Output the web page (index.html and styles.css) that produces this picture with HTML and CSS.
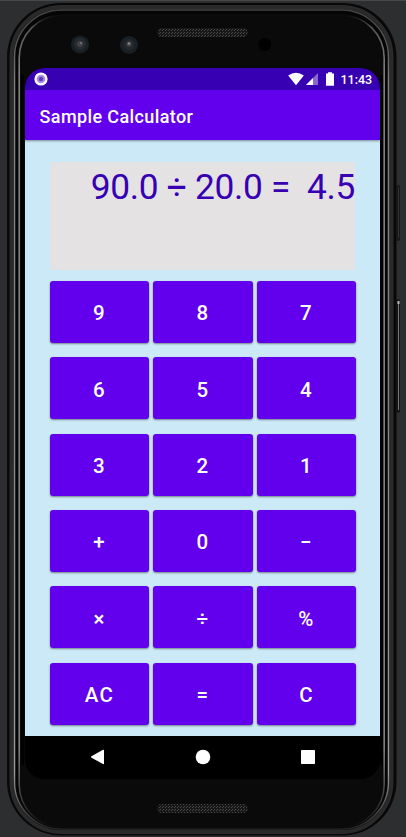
FILE: index.html
```html
<!DOCTYPE html>
<html lang="en">
<head>
<meta charset="utf-8">
<title>Sample Calculator</title>
<link rel="stylesheet" href="styles.css">
</head>
<body>
<div class="emulator">
  <svg class="shell" viewBox="0 0 406 837" aria-hidden="true">
    <defs>
      <linearGradient id="edge" x1="0" x2="0" y1="0" y2="1">
        <stop offset="0" stop-color="#444"/><stop offset=".04" stop-color="#555"/><stop offset=".09" stop-color="#808080"/><stop offset=".5" stop-color="#858585"/><stop offset=".93" stop-color="#999"/><stop offset="1" stop-color="#252525"/>
      </linearGradient>
      <linearGradient id="inner" x1="0" x2="0" y1="0" y2="1">
        <stop offset="0" stop-color="#0a0a0a"/><stop offset=".015" stop-color="#55555a"/><stop offset=".07" stop-color="#808080"/><stop offset=".9" stop-color="#808080"/><stop offset=".97" stop-color="#333338"/><stop offset="1" stop-color="#0a0a0a"/>
      </linearGradient>
      <pattern id="mesh" width="3" height="3" patternUnits="userSpaceOnUse">
        <rect width="3" height="3" fill="#171717"/><path d="M0 0h1v1H0zM1 2h1v1H1z" fill="#484848"/>
      </pattern>
    </defs>
    <path d="M0 .5H406" stroke="#46484a"/>
    <path d="M0 836.5H406" stroke="#302b2f"/>
    <rect x="7" y="3" width="389.500" height="832.500" rx="54" fill="#080808"/>
    <rect x="11.500" y="7" width="380" height="825" rx="50" fill="none" stroke="#2a2a2a" stroke-width="4"/>
    <rect x="14.500" y="10" width="374" height="819" rx="47" fill="#050505" stroke="url(#edge)" stroke-width="1.500"/>
    <rect x="19.200" y="15" width="365" height="812.500" rx="43" fill="#0a0a0a" stroke="url(#inner)" stroke-width="1.600"/>
    <path d="M22.500 75V765M381.500 75V765" stroke="#020202" stroke-width="3"/>
    <rect x="396" y="185" width="4" height="56" rx="2" fill="#161616"/>
    <path d="M398.500 187V238" stroke="#343434"/>
    <rect x="396" y="299" width="4" height="114" rx="2" fill="#151515"/>
    <path d="M398.500 302V410" stroke="#777"/>
    <path d="M398.500 301V304" stroke="#bbb" stroke-width="2"/>
    <rect x="157.500" y="28" width="90" height="9" rx="4" fill="url(#mesh)"/>
    <rect x="157.500" y="804" width="90" height="9" rx="4" fill="url(#mesh)"/>
    <circle cx="80" cy="44.500" r="9" fill="#192025"/><circle cx="80" cy="44" r="6" fill="#282b2e"/><circle cx="80" cy="44" r="3" fill="#42424a"/><circle cx="81" cy="43" r="1" fill="#777785"/>
    <circle cx="129" cy="45" r="9" fill="#192025"/><circle cx="129" cy="44.500" r="5.500" fill="#25282a"/><circle cx="129" cy="44" r="2.500" fill="#4a4a4d"/><circle cx="129" cy="43.500" r="1" fill="#999"/>
    <circle cx="264.700" cy="44.500" r="6.500" fill="#010102"/>
  </svg>
  <main class="screen">
    <div class="status">
      <svg class="record" viewBox="0 0 14 14"><circle cx="7" cy="7" r="6.600" fill="#fff"/><circle cx="7" cy="7" r="4.300" fill="#a88be0"/><circle cx="7" cy="7" r="2.200" fill="#6539c4"/></svg>
      <svg class="signals" viewBox="0 0 48 14">
        <path d="M.2 3.500Q8-2 15.800 3.500L8 13.200Z" fill="#fff"/>
        <path d="M18 13L30 1V13Z" fill="#8968d3"/><path d="M18 13L25 6V13Z" fill="#fff"/>
        <path d="M38 1.500h2V.3h4v1.200h2V13.700h-8z" fill="#fff"/>
      </svg>
      <span class="time">11:43</span>
    </div>
    <header class="appbar"><h1 class="title">Sample Calculator</h1></header>
    <section class="content">
      <div class="display">90.0 ÷ 20.0 =  4.5</div>
      <div class="keys">
        <button class="key">9</button><button class="key">8</button><button class="key">7</button>
        <button class="key">6</button><button class="key">5</button><button class="key">4</button>
        <button class="key">3</button><button class="key">2</button><button class="key">1</button>
        <button class="key">+</button><button class="key">0</button><button class="key">−</button>
        <button class="key">×</button><button class="key">÷</button><button class="key">%</button>
        <button class="key">AC</button><button class="key">=</button><button class="key">C</button>
      </div>
    </section>
    <nav class="navbar">
      <svg class="nav-icon" viewBox="0 0 16 16"><path d="M14 1.500V14.500Q14 15.500 13 15L1.500 8.700Q.5 8 1.500 7.300L13 .8Q14 .5 14 1.500Z" fill="#fff"/></svg>
      <svg class="nav-icon" viewBox="0 0 16 16"><circle cx="8" cy="8" r="7.300" fill="#fff"/></svg>
      <svg class="nav-icon" viewBox="0 0 16 16"><rect x="1" y="1" width="14" height="14" rx=".8" fill="#fff"/></svg>
    </nav>
  </main>
</div>
</body>
</html>
```
FILE: styles.css
```css
* { box-sizing: border-box; }
body { margin: 0; background: #2d2e30; font-family: Roboto, sans-serif; overflow: hidden; }
.emulator { position: relative; width: 406px; height: 837px; padding: 68px 26px 58px 25px; }
.shell { position: absolute; inset: 0; width: 406px; height: 837px; }
.screen { position: relative; width: 355px; height: 711px; border-radius: 20px; overflow: hidden; display: flex; flex-direction: column; background: #000; }
.status { height: 22px; flex: none; background: #3700b3; display: flex; align-items: center; padding: 0 7px 0 9px; color: #fff; }
.record { width: 14px; height: 14px; }
.signals { width: 48px; height: 14px; margin-left: auto; }
.time { font-size: 12.5px; font-weight: 500; line-height: 20px; padding-top: 2px; margin-left: 5px; width: 32.5px; white-space: nowrap; }
.appbar { height: 50px; flex: none; background: #6200ee; padding: 2px 14.6px 0; display: flex; align-items: center; position: relative; z-index: 1; box-shadow: 0 1px 2px rgba(0, 0, 0, .4); }
.title { margin: 0; color: #fff; font-size: 18px; font-weight: 500; letter-spacing: .38px; white-space: nowrap; }
.content { height: 596px; flex: none; background: #cce9f7; padding: 22px 24px 0 25px; }
.display { width: 305px; height: 108px; background: #e4e2e3; color: #3700b3; font-size: 35.3px; line-height: 42px; padding-top: 4px; text-align: right; white-space: pre; letter-spacing: -.32px; }
.keys { margin-top: 10.8px; display: grid; grid-template-columns: repeat(3, 99.2px); grid-auto-rows: 62px; column-gap: 4.3px; row-gap: 14.4px; }
.key { border: 0; border-radius: 3px; background: #6200ee; color: #fff; font: 500 20.5px Roboto, sans-serif; letter-spacing: 1.4px; padding: 3px 0 0; box-shadow: 0 1px 2px rgba(0, 0, 0, .45); }
.navbar { height: 43px; flex: none; display: flex; justify-content: space-between; align-items: center; padding: 0 64px 1px 64.6px; background: #000; }
.nav-icon { width: 16px; height: 16px; }
```
